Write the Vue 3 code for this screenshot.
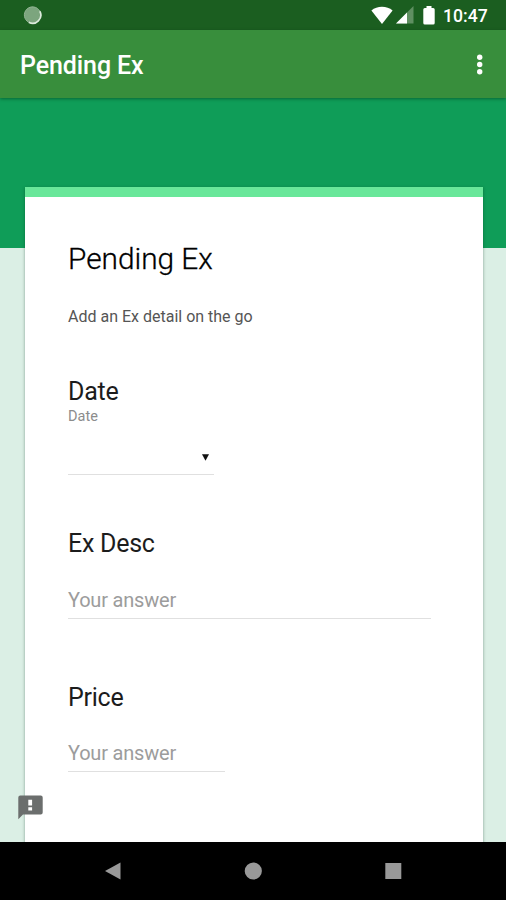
<script setup>
const questions = [
  { id: 'desc', label: 'Ex Desc' },
  { id: 'price', label: 'Price' },
]
</script>

<template>
  <div class="screen">
    <header class="status">
      <svg class="sync" width="20" height="20" viewBox="0 0 20 20">
        <circle cx="9.500" cy="10" r="8.200" fill="#7ca57e" />
        <path d="M16.800 6.200A8.200 8.200 0 0 1 5.700 17.300" fill="none" stroke="#dcebdc" stroke-width="1.700" />
        <path d="M16.800 6.200A8.200 8.200 0 1 0 5.700 17.300" fill="none" stroke="#92b493" stroke-width="1" />
      </svg>
      <div class="indicators">
        <svg class="wifi" width="22" height="19" viewBox="0 0 22 19">
          <path d="M0.4 4.400C3.400 1.900 7 0.700 11 0.700s7.600 1.200 10.600 3.700L11 18z" fill="#fff" />
        </svg>
        <svg class="signal" width="18" height="18" viewBox="0 0 18 18">
          <path d="M0 17.500L17.500 0v17.500z" fill="#5f8f61" />
          <path d="M0 17.500L11 6.500v11z" fill="#fff" />
        </svg>
        <svg class="battery" width="12" height="19" viewBox="0 0 12 19">
          <path d="M3.500 0h5v2h1.700q1.500 0 1.500 1.500v13.500q0 1.500-1.500 1.500H1.800Q.3 18.500.3 17V3.500Q.3 2 1.800 2h1.700z" fill="#fff" />
        </svg>
        <span class="clock">10:47</span>
      </div>
    </header>

    <div class="appbar">
      <h1 class="app-title">Pending Ex</h1>
      <svg class="more" width="8" height="22" viewBox="0 0 8 22" fill="#fff">
        <circle cx="3.700" cy="3.200" r="2.700" />
        <circle cx="3.700" cy="10.500" r="2.700" />
        <circle cx="3.700" cy="17.700" r="2.700" />
      </svg>
    </div>

    <main class="page">
      <form class="card">
        <h2 class="form-title">Pending Ex</h2>
        <p class="description">Add an Ex detail on the go</p>

        <section class="date">
          <h3 class="label">Date</h3>
          <p class="hint">Date</p>
          <div class="select">
            <svg width="7" height="7" viewBox="0 0 7 7"><path d="M0 .3h7L3.500 6.800z" fill="#111" /></svg>
          </div>
        </section>

        <section v-for="q in questions" :key="q.id" class="question" :class="q.id">
          <h3 class="label">{{ q.label }}</h3>
          <div class="answer">Your answer</div>
        </section>
      </form>

      <svg class="feedback" width="25" height="25" viewBox="0 0 25 25">
        <path d="M2.300 .5h20.400q2 0 2 2v15q0 2-2 2H5L.3 24.300V2.500q0-2 2-2z" fill="#6b6e6d" />
        <path d="M10.300 4.700h3.800v5.800h-3.800zM10.300 12.300h3.800v3.300h-3.800z" fill="#fff" />
      </svg>
    </main>

    <nav class="navbar">
      <svg width="18" height="18" viewBox="0 0 18 18"><path d="M1 9L16.500 .5v17z" fill="#999" /></svg>
      <svg width="18" height="18" viewBox="0 0 18 18"><circle cx="9.300" cy="9" r="8.600" fill="#999" /></svg>
      <svg width="18" height="18" viewBox="0 0 18 18"><path d="M1.300 1h16v16h-16z" fill="#999" /></svg>
    </nav>
  </div>
</template>

<style>
body {
  margin: 0;
}
</style>

<style scoped>
.screen {
  width: 506px;
  height: 900px;
  display: flex;
  flex-direction: column;
  overflow: hidden;
  font-family: Roboto, sans-serif;
}
h1, h2, h3, p {
  margin: 0;
  font-weight: 400;
}
svg {
  display: block;
  flex: none;
}
.status {
  box-sizing: border-box;
  height: 30px;
  flex: none;
  display: flex;
  align-items: center;
  justify-content: space-between;
  padding: 0 18px 0 23px;
  background: #1b5e20;
}
.indicators {
  display: flex;
  align-items: center;
}
.signal {
  margin-left: 3px;
}
.battery {
  margin-left: 9px;
}
.clock {
  width: 45px;
  margin-left: 8px;
  padding-top: 2px;
  font-size: 17.6px;
  line-height: 30px;
  font-weight: 500;
  color: #fff;
}
.appbar {
  box-sizing: border-box;
  position: relative;
  z-index: 1;
  height: 68px;
  flex: none;
  display: flex;
  align-items: center;
  justify-content: space-between;
  padding: 2px 22px 0 20px;
  background: #388e3c;
  box-shadow: 0 1px 3px rgba(0, 50, 20, 0.5);
}
.app-title {
  padding-top: 2px;
  font-size: 25px;
  letter-spacing: -0.1px;
  line-height: 30px;
  font-weight: 500;
  color: #fff;
}
.page {
  position: relative;
  box-sizing: border-box;
  height: 744px;
  flex: none;
  padding: 89px 23.5px 0 25.3px;
  background: linear-gradient(#0f9d58 150px, #dbefe5 150px);
  overflow: hidden;
}
.card {
  box-sizing: border-box;
  height: 700px;
  padding: 44px 51.5px 0 42.7px;
  border-top: 10px solid #69e79a;
  background: #fff;
  box-shadow: 0 1px 3px rgba(0, 40, 20, 0.4);
}
.form-title {
  font-size: 29.8px;
  line-height: 36px;
  font-weight: 300;
  color: #000;
  -webkit-text-stroke: 0.3px #000;
}
.description {
  margin-top: 30px;
  font-size: 16px;
  line-height: 20px;
  color: #555;
}
.date {
  margin-top: 50px;
}
.label {
  font-size: 25px;
  letter-spacing: -0.25px;
  line-height: 30px;
  color: #1c1c1c;
}
.hint {
  padding-top: 1px;
  font-size: 14.5px;
  line-height: 18px;
  color: #8c8c8c;
}
.select {
  box-sizing: border-box;
  width: 146.5px;
  height: 49px;
  display: flex;
  justify-content: flex-end;
  padding: 28px 5.5px 0 0;
  border-bottom: 1px solid #e0e0e0;
}
.question {
  padding-top: 54px;
}
.answer {
  box-sizing: border-box;
  height: 31px;
  margin-top: 29px;
  font-size: 20px;
  letter-spacing: -0.2px;
  line-height: 24px;
  color: #9c9c9c;
  border-bottom: 1px solid #e0e0e0;
}
.price {
  padding-top: 64px;
}
.price .answer {
  width: 157.5px;
  margin-top: 28px;
}
.feedback {
  position: absolute;
  left: 18px;
  top: 697px;
}
.navbar {
  height: 58px;
  flex: none;
  display: flex;
  align-items: center;
  justify-content: center;
  gap: 122px;
  background: #000;
}
</style>
